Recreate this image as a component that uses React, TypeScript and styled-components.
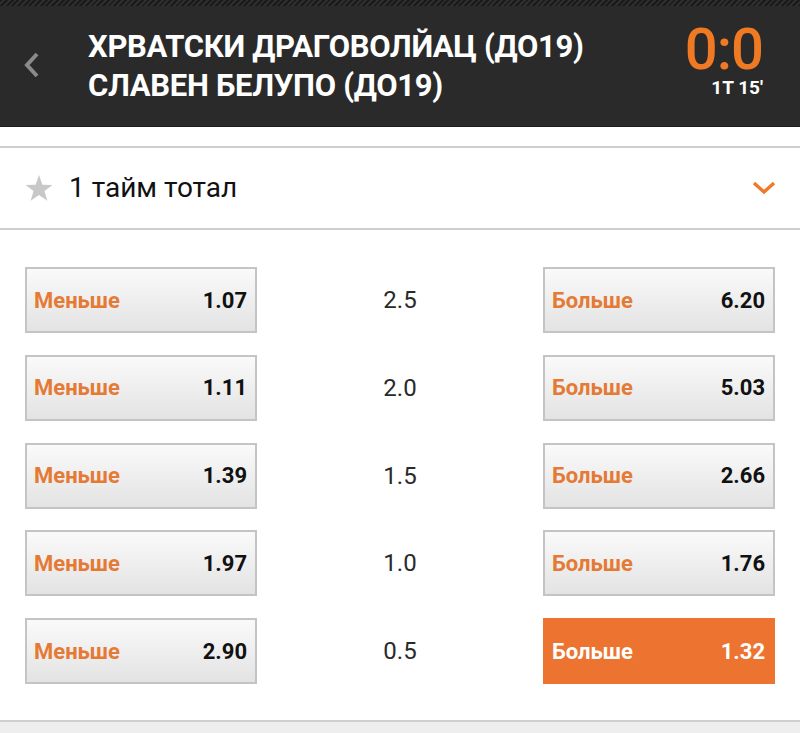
import * as React from 'react';
import styled, { createGlobalStyle } from 'styled-components';

const GlobalStyle = createGlobalStyle`
    html, body {
        margin: 0;
        padding: 0;
        background: #ffffff;
    }
    body {
        font-family: Roboto, "Liberation Sans", Arial, sans-serif;
    }
`;

const orange = '#ec7330';

const Page = styled.div`
    width: 800px;
    height: 733px;
    overflow: hidden;
    display: flex;
    flex-direction: column;
    background: #ffffff;
`;

const Header = styled.div`
    height: 127px;
    box-sizing: border-box;
    background: #2a2a2a;
    border-bottom: 1px solid #1c1c1c;
    display: grid;
    grid-template-columns: 88px 1fr auto;
    align-items: center;
    padding-right: 37px;
    position: relative;

    &::before {
        content: '';
        position: absolute;
        left: 0;
        right: 0;
        top: 0;
        height: 6px;
        background: repeating-linear-gradient(135deg, #1a1a1a 0 2px, #2e2e2e 2px 4px);
    }
`;

const BackButton = styled.div`
    display: flex;
    justify-content: center;
    padding-right: 25px;
    padding-top: 4px;
`;

const Teams = styled.div`
    display: flex;
    flex-direction: column;
    padding-top: 6px;
`;

const TeamName = styled.div`
    color: #ffffff;
    font-weight: 700;
    font-size: 31px;
    line-height: 39px;
    letter-spacing: -0.3px;
    white-space: nowrap;
`;

const Score = styled.div`
    display: flex;
    flex-direction: column;
    align-items: flex-end;
    margin-top: -4px;
`;

const ScoreValue = styled.div`
    color: #f07a24;
    font-weight: 500;
    font-size: 58px;
    line-height: 48px;
    letter-spacing: -1px;
`;

const ScoreTime = styled.div`
    color: #ffffff;
    font-weight: 700;
    font-size: 19px;
    line-height: 18px;
    margin-top: 6px;
`;

const Gap = styled.div`
    height: 19px;
`;

const SectionHeader = styled.div`
    height: 84px;
    box-sizing: border-box;
    border-top: 2px solid #cfcfcf;
    border-bottom: 2px solid #cfcfcf;
    display: flex;
    align-items: center;
    padding: 0 24px 0 25px;
`;

const SectionTitle = styled.div`
    flex: 1;
    margin-left: 16px;
    font-size: 28px;
    color: #111111;
    padding-bottom: 2px;
`;

const Lines = styled.div`
    display: flex;
    flex-direction: column;
    gap: 21.8px;
    padding: 37px 25px 36px;
`;

const Row = styled.div`
    display: grid;
    grid-template-columns: 232px 1fr 232px;
    align-items: center;
`;

const OddButton = styled.div<{ $active?: boolean }>`
    height: 66px;
    box-sizing: border-box;
    display: flex;
    align-items: center;
    justify-content: space-between;
    padding: 0 8px 0 7px;
    border: 2px solid ${(p) => (p.$active ? orange : '#c4c4c4')};
    background: ${(p) => (p.$active ? orange : 'linear-gradient(#fafafa, #e3e3e3)')};
    font-weight: 700;
    font-size: 22px;
`;

const OddLabel = styled.span<{ $active?: boolean }>`
    color: ${(p) => (p.$active ? '#ffffff' : '#e57a35')};
`;

const OddValue = styled.span<{ $active?: boolean }>`
    color: ${(p) => (p.$active ? '#ffffff' : '#111111')};
    font-size: 22px;
`;

const Line = styled.div`
    text-align: center;
    font-size: 24px;
    color: #2a2a2a;
`;

const Footer = styled.div`
    flex: 1;
    border-top: 2px solid #cfcfcf;
    background: #eeeeee;
`;

const rows = [
    { under: '1.07', line: '2.5', over: '6.20' },
    { under: '1.11', line: '2.0', over: '5.03' },
    { under: '1.39', line: '1.5', over: '2.66' },
    { under: '1.97', line: '1.0', over: '1.76' },
    { under: '2.90', line: '0.5', over: '1.32', selected: true },
];

export default function App() {
    return (
        <Page>
            <GlobalStyle />
            <Header>
                <BackButton>
                    <svg width="16" height="28" viewBox="0 0 16 28">
                        <path d="M13 3 L3 14 L13 25" fill="none" stroke="#8a8a8a" strokeWidth="4" />
                    </svg>
                </BackButton>
                <Teams>
                    <TeamName>ХРВАТСКИ ДРАГОВОЛЙАЦ (ДО19)</TeamName>
                    <TeamName>СЛАВЕН БЕЛУПО (ДО19)</TeamName>
                </Teams>
                <Score>
                    <ScoreValue>0:0</ScoreValue>
                    <ScoreTime>1T 15'</ScoreTime>
                </Score>
            </Header>
            <Gap />
            <SectionHeader>
                <svg width="28" height="27" viewBox="0 0 24 23">
                    <path
                        d="M12 0 L14.9 8.2 L23.5 8.4 L16.7 13.7 L19.1 22 L12 17.1 L4.9 22 L7.3 13.7 L0.5 8.4 L9.1 8.2 Z"
                        fill="#c8c8c8"
                    />
                </svg>
                <SectionTitle>1 тайм тотал</SectionTitle>
                <svg width="24" height="14" viewBox="0 0 24 14">
                    <path d="M2 2 L12 11 L22 2" fill="none" stroke="#ee7a2a" strokeWidth="3.5" />
                </svg>
            </SectionHeader>
            <Lines>
                {rows.map((r) => (
                    <Row key={r.line}>
                        <OddButton>
                            <OddLabel>Меньше</OddLabel>
                            <OddValue>{r.under}</OddValue>
                        </OddButton>
                        <Line>{r.line}</Line>
                        <OddButton $active={r.selected}>
                            <OddLabel $active={r.selected}>Больше</OddLabel>
                            <OddValue $active={r.selected}>{r.over}</OddValue>
                        </OddButton>
                    </Row>
                ))}
            </Lines>
            <Footer />
        </Page>
    );
}
